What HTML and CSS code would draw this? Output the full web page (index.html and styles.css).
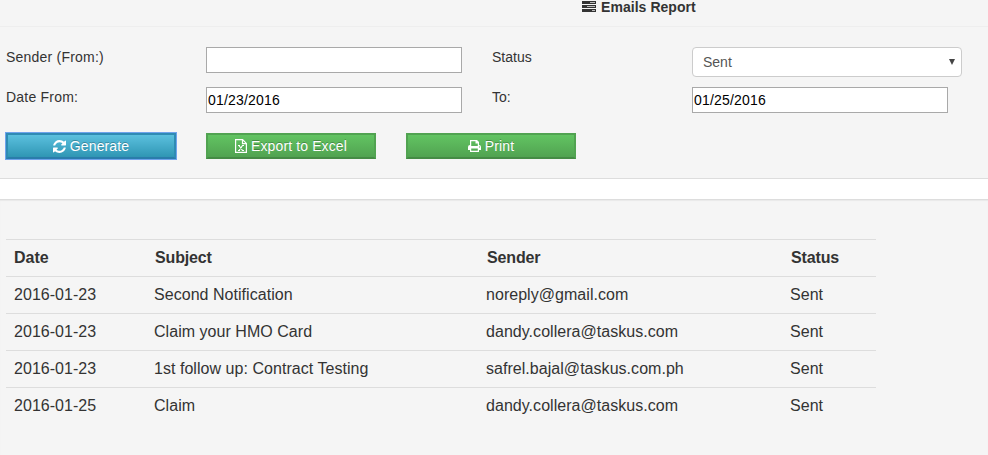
FILE: index.html
```html
<!DOCTYPE html>
<html lang="en">
<head>
<meta charset="utf-8">
<title>Emails Report</title>
<link rel="stylesheet" href="styles.css">
</head>
<body>
<section class="panel">
  <header class="panel-header">
    <svg class="icon icon-title" viewBox="0 0 14 11"><path fill="currentColor" d="M0 0h14v3H0zM0 4h14v3H0zM0 8h14v3H0z"/><path stroke="#bbb" d="M8 1.500h5M5 5.500h8M10 9.500h3"/></svg>
    <h1>Emails Report</h1>
  </header>
  <form class="filters">
    <div class="fields">
      <label class="spaced" for="sender">Sender (From:)</label>
      <input id="sender" type="text">
      <label for="status">Status</label>
      <div class="select" id="status"><span>Sent</span><svg class="arrow" viewBox="0 0 6 6"><path d="M0 0h6L3 6z" fill="#444"/></svg></div>
      <label class="spaced" for="from">Date From:</label>
      <input id="from" type="text" value="01/23/2016">
      <label for="to">To:</label>
      <input id="to" type="text" value="01/25/2016">
    </div>
    <div class="actions">
      <button type="button" class="btn btn-info"><svg class="icon" viewBox="0 0 1536 1536"><path fill="currentColor" d="M1511 928q0 5-1 7-64 268-268 434.500T764 1536q-146 0-282.500-55T238 1324l-129 129q-19 19-45 19t-45-19-19-45V960q0-26 19-45t45-19h448q26 0 45 19t19 45-19 45l-137 137q71 66 161 102t187 36q134 0 250-65t186-179q11-17 53-117 8-23 30-23h192q13 0 22.500 9.500t9.500 22.500zm25-800v448q0 26-19 45t-45 19h-448q-26 0-45-19t-19-45 19-45l138-138Q969 256 768 256q-134 0-250 65T332 500q-11 17-53 117-8 23-30 23H50q-13 0-22.500-9.500T18 608v-7q65-268 270-434.500T768 0q146 0 284 55.500T1297 212l130-129q19-19 45-19t45 19 19 45z"/></svg>Generate</button>
      <button type="button" class="btn btn-success"><svg class="icon icon-file" viewBox="0 0 12 14"><path fill="none" stroke="currentColor" stroke-width="1.200" d="M.6.600h7l3.800 3.800v9H.6zM7.500.600v4h4M4 6.500l3.500 5M7.500 6.500l-3.500 5M3 6.500h2M7 6.500h2M3 11.500h2M7 11.500h2"/></svg>Export to Excel</button>
      <button type="button" class="btn btn-success"><svg class="icon icon-print" viewBox="0 0 13 12"><path fill="currentColor" fill-rule="evenodd" d="M2 0h7l2 2v3q2 0 2 2v3h-2v2H2v-2H0V7q0-2 2-2zM3.200 1.200v4.800h6.600V3.500H7.500V1.200zM3.200 8.500v2.300h6.600V8.500zM11 6.500v1h1v-1z"/></svg>Print</button>
    </div>
  </form>
</section>
<section class="results">
  <table>
    <colgroup><col class="date"><col class="subject"><col class="from"><col class="state"></colgroup>
    <thead><tr><th>Date</th><th>Subject</th><th>Sender</th><th>Status</th></tr></thead>
    <tbody>
      <tr><td>2016-01-23</td><td>Second Notification</td><td>noreply@gmail.com</td><td>Sent</td></tr>
      <tr><td>2016-01-23</td><td>Claim your HMO Card</td><td>dandy.collera@taskus.com</td><td>Sent</td></tr>
      <tr><td>2016-01-23</td><td>1st follow up: Contract Testing</td><td>safrel.bajal@taskus.com.ph</td><td>Sent</td></tr>
      <tr><td>2016-01-25</td><td>Claim</td><td>dandy.collera@taskus.com</td><td>Sent</td></tr>
    </tbody>
  </table>
</section>
</body>
</html>
```
FILE: styles.css
```css
* { box-sizing: border-box; }
body { margin: 0; background: #fff; color: #333; font: 14px/20px "Liberation Sans", Arial, sans-serif; overflow: hidden; }
.panel { height: 179px; background: #f5f5f5; border-bottom: 1px solid #ddd; }
.panel-header { height: 27px; padding: 0 0 13px 582px; display: flex; align-items: center; gap: 5px; border-bottom: 1px solid #eee; }
h1 { margin: 0; font-size: 14px; line-height: 14px; font-weight: 700; letter-spacing: .05px; }
.icon { width: 13px; height: 13px; flex: none; }
.icon-title { width: 14px; height: 11px; }
.icon-file { width: 12px; height: 14px; }
.icon-print { height: 12px; }
.filters { padding: 20px 6px 0; }
.fields { display: grid; grid-template-columns: 200px 286px 200px 270px; grid-template-rows: 40px 46px; }
.spaced { letter-spacing: .22px; }
.fields input { width: 256px; height: 26px; padding: 1px; border: 1px solid #a9a9a9; background: #fff; color: #000; font: 14px "Liberation Sans", Arial, sans-serif; letter-spacing: .2px; }
.select { width: 270px; height: 30px; padding: 0 6px 0 10px; display: flex; align-items: center; justify-content: space-between; border: 1px solid #ccc; border-radius: 4px; background: #fff; color: #555; }
.arrow { width: 6px; height: 6px; }
.actions { display: flex; gap: 30px; }
.btn { width: 170px; height: 26px; padding: 0; display: flex; align-items: center; justify-content: center; gap: 4px; color: #fff; font: 14px "Liberation Sans", Arial, sans-serif; letter-spacing: .12px; text-shadow: 0 -1px 0 rgba(0, 0, 0, .25); }
.btn-info { border: 2px solid #2f8bb4; border-bottom-color: #2a7cab; background: linear-gradient(#5bc0de, #2f96b4); box-shadow: 0 0 0 1px #6ea3ec; }
.btn-success { border: 2px solid #51a351; border-bottom-color: #458b45; background: linear-gradient(#62c462, #51a351); }
.results { height: 256px; margin-top: 20px; padding: 39px 6px 0; border-top: 1px solid #ddd; background: #f5f5f5; box-shadow: inset 0 1px 1px rgba(0, 0, 0, .05); }
table { width: 870px; table-layout: fixed; border-collapse: collapse; font: 16px/20px "Liberation Sans", Arial, sans-serif; }
.date { width: 140px; } .subject { width: 332px; } .from { width: 304px; } .state { width: 94px; }
th, td { height: 37px; padding: 0 8px; text-align: left; border-top: 1px solid #ddd; }
td { letter-spacing: .04px; }
th + th { padding-left: 9px; letter-spacing: -.15px; }
```
